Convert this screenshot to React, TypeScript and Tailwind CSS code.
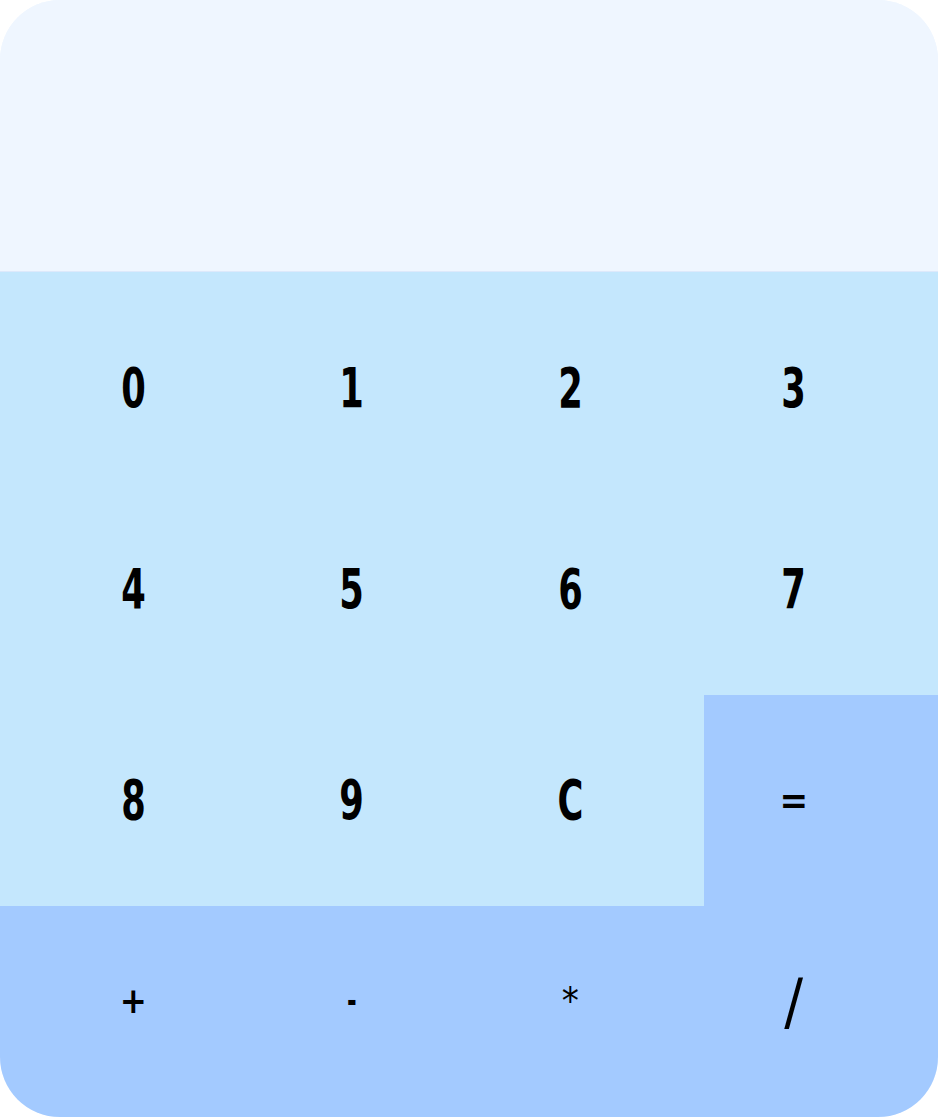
import React from 'react'

const rows = [
  ['0', '1', '2', '3'],
  ['4', '5', '6', '7'],
  ['8', '9', 'C', '='],
  ['+', '-', '*', '/'],
]

// nudges so the labels sit where the original puts them
const nudge = ['pl-8', '', 'pr-8', 'pr-[54px]']

const sizes: Record<string, string> = {
  '=': 'text-[38px] font-bold',
  '+': 'text-[36px] font-bold',
  '-': 'text-[36px] font-bold scale-x-[0.72]',
  '*': 'text-[38px] font-normal',
  '/': 'text-[62px] font-normal',
}

const App = () => {
  return (
    <div className='w-[938px] h-[1117px] bg-white'>
      <div className='flex flex-col h-full overflow-hidden rounded-[60px] bg-[#eff6ff]' style={{ fontFamily: '"DejaVu Sans Condensed", "Liberation Sans Narrow", "Liberation Sans", sans-serif' }}>
        <div className='h-[272px] border-b border-[#dde9fb] bg-[#eff6ff]'></div>
        {rows.map((row, r) => (
          <div key={r} className={`grid flex-1 grid-cols-4 ${r === 3 ? 'bg-[#a3caff]' : 'bg-[#c4e7fd]'}`}>
            {row.map((key, c) => (
              <button
                key={key}
                className={`flex items-center justify-center text-black ${nudge[c]} ${key === '=' ? 'bg-[#a3caff]' : ''} ${r === 0 ? 'pt-5' : ''} ${r === 3 ? 'pb-5' : ''}`}
              >
                <span className={`inline-block ${sizes[key] ?? 'text-[56px] font-bold scale-x-[0.7]'}`}>{key}</span>
              </button>
            ))}
          </div>
        ))}
      </div>
    </div>
  )
}

export default App
